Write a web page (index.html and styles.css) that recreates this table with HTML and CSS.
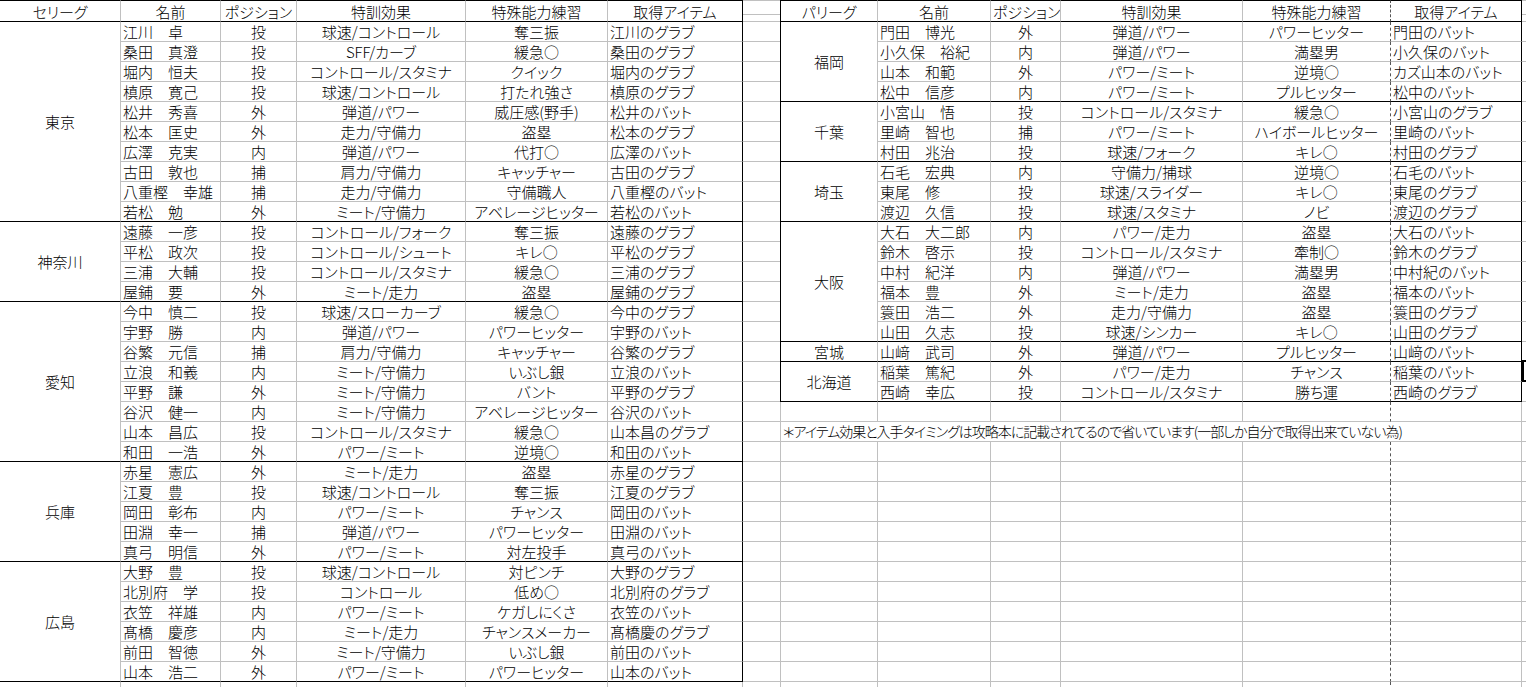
FILE: index.html
```html
<!DOCTYPE html>
<html lang="ja">
<head>
<meta charset="utf-8">
<title>sheet</title>
<link rel="stylesheet" href="styles.css">
</head>
<body>
<div class="sheet">
  <table class="t lt">
    <colgroup><col class="ca"><col class="cb"><col class="cc"><col class="cd"><col class="ce"><col class="cf"></colgroup>
    <tr class="hd"><th>セリーグ</th><th>名前</th><th>ポジション</th><th>特訓効果</th><th>特殊能力練習</th><th class="last">取得アイテム</th></tr>

    <tr><td class="pref" rowspan="10">東京</td><td class="nm">江川　卓</td><td>投</td><td>球速/コントロール</td><td>奪三振</td><td class="it last">江川のグラブ</td></tr>
    <tr><td class="nm">桑田　真澄</td><td>投</td><td>SFF/カーブ</td><td>緩急○</td><td class="it last">桑田のグラブ</td></tr>
    <tr><td class="nm">堀内　恒夫</td><td>投</td><td>コントロール/スタミナ</td><td>クイック</td><td class="it last">堀内のグラブ</td></tr>
    <tr><td class="nm">槙原　寛己</td><td>投</td><td>球速/コントロール</td><td>打たれ強さ</td><td class="it last">槙原のグラブ</td></tr>
    <tr><td class="nm">松井　秀喜</td><td>外</td><td>弾道/パワー</td><td>威圧感(野手)</td><td class="it last">松井のバット</td></tr>
    <tr><td class="nm">松本　匡史</td><td>外</td><td>走力/守備力</td><td>盗塁</td><td class="it last">松本のグラブ</td></tr>
    <tr><td class="nm">広澤　克実</td><td>内</td><td>弾道/パワー</td><td>代打○</td><td class="it last">広澤のバット</td></tr>
    <tr><td class="nm">古田　敦也</td><td>捕</td><td>肩力/守備力</td><td>キャッチャー</td><td class="it last">古田のグラブ</td></tr>
    <tr><td class="nm">八重樫　幸雄</td><td>捕</td><td>走力/守備力</td><td>守備職人</td><td class="it last">八重樫のバット</td></tr>
    <tr class="end"><td class="nm">若松　勉</td><td>外</td><td>ミート/守備力</td><td>アベレージヒッター</td><td class="it last">若松のバット</td></tr>

    <tr><td class="pref" rowspan="4">神奈川</td><td class="nm">遠藤　一彦</td><td>投</td><td>コントロール/フォーク</td><td>奪三振</td><td class="it last">遠藤のグラブ</td></tr>
    <tr><td class="nm">平松　政次</td><td>投</td><td>コントロール/シュート</td><td>キレ○</td><td class="it last">平松のグラブ</td></tr>
    <tr><td class="nm">三浦　大輔</td><td>投</td><td>コントロール/スタミナ</td><td>緩急○</td><td class="it last">三浦のグラブ</td></tr>
    <tr class="end"><td class="nm">屋鋪　要</td><td>外</td><td>ミート/走力</td><td>盗塁</td><td class="it last">屋鋪のグラブ</td></tr>

    <tr><td class="pref" rowspan="8">愛知</td><td class="nm">今中　慎二</td><td>投</td><td>球速/スローカーブ</td><td>緩急○</td><td class="it last">今中のグラブ</td></tr>
    <tr><td class="nm">宇野　勝</td><td>内</td><td>弾道/パワー</td><td>パワーヒッター</td><td class="it last">宇野のバット</td></tr>
    <tr><td class="nm">谷繁　元信</td><td>捕</td><td>肩力/守備力</td><td>キャッチャー</td><td class="it last">谷繁のグラブ</td></tr>
    <tr><td class="nm">立浪　和義</td><td>内</td><td>ミート/守備力</td><td>いぶし銀</td><td class="it last">立浪のバット</td></tr>
    <tr><td class="nm">平野　謙</td><td>外</td><td>ミート/守備力</td><td>バント</td><td class="it last">平野のグラブ</td></tr>
    <tr><td class="nm">谷沢　健一</td><td>内</td><td>ミート/守備力</td><td>アベレージヒッター</td><td class="it last">谷沢のバット</td></tr>
    <tr><td class="nm">山本　昌広</td><td>投</td><td>コントロール/スタミナ</td><td>緩急○</td><td class="it last">山本昌のグラブ</td></tr>
    <tr class="end"><td class="nm">和田　一浩</td><td>外</td><td>パワー/ミート</td><td>逆境○</td><td class="it last">和田のバット</td></tr>

    <tr><td class="pref" rowspan="5">兵庫</td><td class="nm">赤星　憲広</td><td>外</td><td>ミート/走力</td><td>盗塁</td><td class="it last">赤星のグラブ</td></tr>
    <tr><td class="nm">江夏　豊</td><td>投</td><td>球速/コントロール</td><td>奪三振</td><td class="it last">江夏のグラブ</td></tr>
    <tr><td class="nm">岡田　彰布</td><td>内</td><td>パワー/ミート</td><td>チャンス</td><td class="it last">岡田のバット</td></tr>
    <tr><td class="nm">田淵　幸一</td><td>捕</td><td>弾道/パワー</td><td>パワーヒッター</td><td class="it last">田淵のバット</td></tr>
    <tr class="end"><td class="nm">真弓　明信</td><td>外</td><td>パワー/ミート</td><td>対左投手</td><td class="it last">真弓のバット</td></tr>

    <tr><td class="pref" rowspan="6">広島</td><td class="nm">大野　豊</td><td>投</td><td>球速/コントロール</td><td>対ピンチ</td><td class="it last">大野のグラブ</td></tr>
    <tr><td class="nm">北別府　学</td><td>投</td><td>コントロール</td><td>低め○</td><td class="it last">北別府のグラブ</td></tr>
    <tr><td class="nm">衣笠　祥雄</td><td>内</td><td>パワー/ミート</td><td>ケガしにくさ</td><td class="it last">衣笠のバット</td></tr>
    <tr><td class="nm">髙橋　慶彦</td><td>内</td><td>ミート/走力</td><td>チャンスメーカー</td><td class="it last">髙橋慶のグラブ</td></tr>
    <tr><td class="nm">前田　智徳</td><td>外</td><td>ミート/守備力</td><td>いぶし銀</td><td class="it last">前田のバット</td></tr>
    <tr class="end"><td class="nm">山本　浩二</td><td>外</td><td>パワー/ミート</td><td>パワーヒッター</td><td class="it last">山本のバット</td></tr>

    <tr class="e"><td></td><td></td><td></td><td></td><td></td><td></td></tr>
  </table>

  <div class="gap"></div>

  <table class="t rt">
    <colgroup><col class="ch"><col class="ci"><col class="cj"><col class="ck"><col class="cl"><col class="cm"></colgroup>
    <tr class="hd"><th class="first">パリーグ</th><th>名前</th><th>ポジション</th><th>特訓効果</th><th class="dash">特殊能力練習</th><th class="last">取得アイテム</th></tr>

    <tr><td class="pref first" rowspan="4">福岡</td><td class="nm">門田　博光</td><td>外</td><td>弾道/パワー</td><td class="dash">パワーヒッター</td><td class="it last">門田のバット</td></tr>
    <tr><td class="nm">小久保　裕紀</td><td>内</td><td>弾道/パワー</td><td class="dash">満塁男</td><td class="it last">小久保のバット</td></tr>
    <tr><td class="nm">山本　和範</td><td>外</td><td>パワー/ミート</td><td class="dash">逆境○</td><td class="it last">カズ山本のバット</td></tr>
    <tr class="end"><td class="nm">松中　信彦</td><td>内</td><td>パワー/ミート</td><td class="dash">プルヒッター</td><td class="it last">松中のバット</td></tr>

    <tr><td class="pref first" rowspan="3">千葉</td><td class="nm">小宮山　悟</td><td>投</td><td>コントロール/スタミナ</td><td class="dash">緩急○</td><td class="it last">小宮山のグラブ</td></tr>
    <tr><td class="nm">里崎　智也</td><td>捕</td><td>パワー/ミート</td><td class="dash">ハイボールヒッター</td><td class="it last">里崎のバット</td></tr>
    <tr class="end"><td class="nm">村田　兆治</td><td>投</td><td>球速/フォーク</td><td class="dash">キレ○</td><td class="it last">村田のグラブ</td></tr>

    <tr><td class="pref first" rowspan="3">埼玉</td><td class="nm">石毛　宏典</td><td>内</td><td>守備力/捕球</td><td class="dash">逆境○</td><td class="it last">石毛のバット</td></tr>
    <tr><td class="nm">東尾　修</td><td>投</td><td>球速/スライダー</td><td class="dash">キレ○</td><td class="it last">東尾のグラブ</td></tr>
    <tr class="end"><td class="nm">渡辺　久信</td><td>投</td><td>球速/スタミナ</td><td class="dash">ノビ</td><td class="it last">渡辺のグラブ</td></tr>

    <tr><td class="pref first" rowspan="6">大阪</td><td class="nm">大石　大二郎</td><td>内</td><td>パワー/走力</td><td class="dash">盗塁</td><td class="it last">大石のバット</td></tr>
    <tr><td class="nm">鈴木　啓示</td><td>投</td><td>コントロール/スタミナ</td><td class="dash">牽制○</td><td class="it last">鈴木のグラブ</td></tr>
    <tr><td class="nm">中村　紀洋</td><td>内</td><td>弾道/パワー</td><td class="dash">満塁男</td><td class="it last">中村紀のバット</td></tr>
    <tr><td class="nm">福本　豊</td><td>外</td><td>ミート/走力</td><td class="dash">盗塁</td><td class="it last">福本のバット</td></tr>
    <tr><td class="nm">簑田　浩二</td><td>外</td><td>走力/守備力</td><td class="dash">盗塁</td><td class="it last">簑田のグラブ</td></tr>
    <tr class="end"><td class="nm">山田　久志</td><td>投</td><td>球速/シンカー</td><td class="dash">キレ○</td><td class="it last">山田のグラブ</td></tr>

    <tr class="end"><td class="pref first">宮城</td><td class="nm">山﨑　武司</td><td>外</td><td>弾道/パワー</td><td class="dash">プルヒッター</td><td class="it last">山﨑のバット</td></tr>

    <tr><td class="pref first" rowspan="2">北海道</td><td class="nm">稲葉　篤紀</td><td>外</td><td>パワー/走力</td><td class="dash">チャンス</td><td class="it last">稲葉のバット</td></tr>
    <tr class="end"><td class="nm">西崎　幸広</td><td>投</td><td>コントロール/スタミナ</td><td class="dash">勝ち運</td><td class="it last">西崎のグラブ</td></tr>

    <tr class="e"><td class="f"></td><td></td><td></td><td></td><td class="dash"></td><td></td></tr>
    <tr class="e"><td class="f note" colspan="6">＊アイテム効果と入手タイミングは攻略本に記載されてるので省いています(一部しか自分で取得出来ていない為)</td></tr>
    <tr class="e"><td class="f"></td><td></td><td></td><td></td><td class="dash"></td><td></td></tr>
    <tr class="e"><td class="f"></td><td></td><td></td><td></td><td class="dash"></td><td></td></tr>
    <tr class="e"><td class="f"></td><td></td><td></td><td></td><td class="dash"></td><td></td></tr>
    <tr class="e"><td class="f"></td><td></td><td></td><td></td><td class="dash"></td><td></td></tr>
    <tr class="e"><td class="f"></td><td></td><td></td><td></td><td class="dash"></td><td></td></tr>
    <tr class="e"><td class="f"></td><td></td><td></td><td></td><td class="dash"></td><td></td></tr>
    <tr class="e"><td class="f"></td><td></td><td></td><td></td><td class="dash"></td><td></td></tr>
    <tr class="e"><td class="f"></td><td></td><td></td><td></td><td class="dash"></td><td></td></tr>
    <tr class="e"><td class="f"></td><td></td><td></td><td></td><td class="dash"></td><td></td></tr>
    <tr class="e"><td class="f"></td><td></td><td></td><td></td><td class="dash"></td><td></td></tr>
    <tr class="e"><td class="f"></td><td></td><td></td><td></td><td class="dash"></td><td></td></tr>
    <tr class="e"><td class="f"></td><td></td><td></td><td></td><td class="dash"></td><td></td></tr>
    <tr class="e"><td class="f"></td><td></td><td></td><td></td><td class="dash"></td><td></td></tr>
  </table>

  <div class="edge"><div class="cursor"></div></div>
</div>
</body>
</html>
```

FILE: styles.css
```css
* { box-sizing: border-box; }

html, body {
  margin: 0;
  padding: 0;
  background: #fff;
  overflow: hidden;
}

body {
  font-family: "Noto Sans CJK JP", "Noto Sans", sans-serif;
  font-size: 15px;
  font-weight: 300;
  color: #000;
}

.sheet {
  display: flex;
  align-items: flex-start;
  width: 1526px;
  height: 687px;
  overflow: hidden;
}

.t {
  flex: none;
  border-collapse: separate;
  border-spacing: 0;
  table-layout: fixed;
}

.lt { width: 743px; }
.rt { width: 742px; }

.ca { width: 121px; }
.cb { width: 100px; }
.cc { width: 76px; }
.cd { width: 169px; }
.ce { width: 142px; }
.cf { width: 135px; }

.ch { width: 98px; }
.ci { width: 113px; }
.cj { width: 70px; }
.ck { width: 182px; }
.cl { width: 148px; }
.cm { width: 131px; }

.t tr { height: 20px; }
.t tr.hd { height: 22px; }

.t th,
.t td {
  padding: 0 2px;
  border: 0;
  border-right: 1px solid #c0c0c0;
  border-bottom: 1px solid #c0c0c0;
  font-weight: 300;
  line-height: 19px;
  white-space: nowrap;
  overflow: hidden;
  text-align: center;
  vertical-align: middle;
  font-feature-settings: "palt";
}

.t tr.hd th {
  border-top: 1px solid #000;
  border-bottom-color: #000;
}

.t td.nm {
  text-align: left;
  font-feature-settings: normal;
}

.t td.it { text-align: left; }

.t tr.end td,
.t td.pref { border-bottom-color: #000; }

.t th.last,
.t td.last { border-right-color: #000; }

.rt th.first,
.rt td.first { border-left: 1px solid #000; }

.rt td.f { border-left: 1px solid #c0c0c0; }

.rt th.dash,
.rt td.dash { border-right: 1px dashed #555; }

.rt td.note {
  text-align: left;
  overflow: visible;
  font-size: 14px;
  letter-spacing: -1px;
}

.gap {
  flex: none;
  width: 37px;
  height: 687px;
  background:
    linear-gradient(#c0c0c0, #c0c0c0) 0 0 / 100% 1px no-repeat,
    repeating-linear-gradient(to bottom, #c0c0c0 0, #c0c0c0 1px, transparent 1px, transparent 20px) 0 21px;
}

.edge {
  flex: none;
  position: relative;
  width: 4px;
  height: 687px;
  background:
    linear-gradient(#c0c0c0, #c0c0c0) 0 0 / 100% 1px no-repeat,
    repeating-linear-gradient(to bottom, #c0c0c0 0, #c0c0c0 1px, transparent 1px, transparent 20px) 0 21px;
}

.cursor {
  position: absolute;
  top: 360px;
  left: 0;
  width: 4px;
  height: 22px;
  border: 2px solid #000;
  border-right: 0;
}
```
